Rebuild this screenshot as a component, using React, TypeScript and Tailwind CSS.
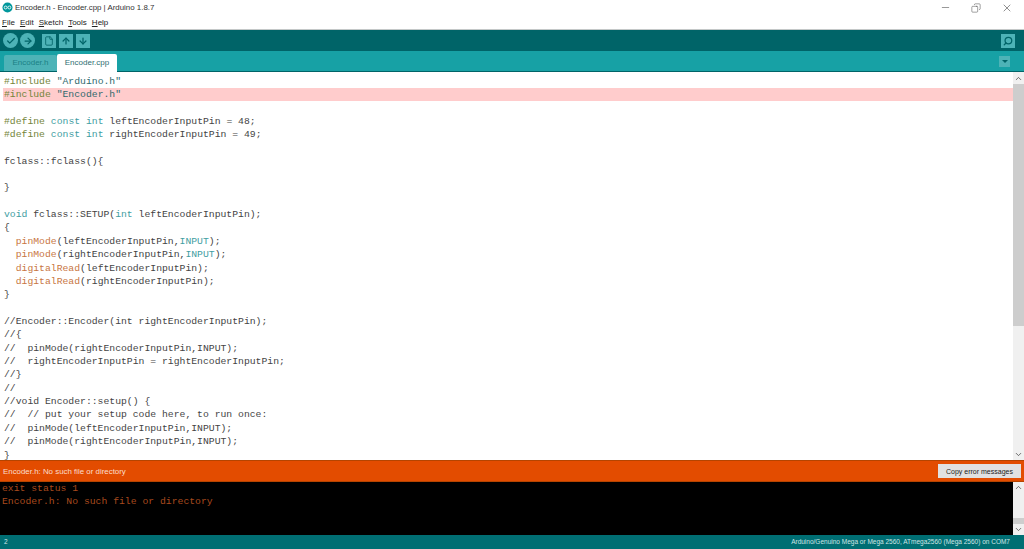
import { ArrowDown, ArrowRight, ArrowUp, Check, ChevronDown, ChevronUp, Copy, File, Minus, Search, X } from 'lucide-react'

const KW = 'text-[#3f9ea2]'
const FN = 'text-[#c8763f]'
const DEF = 'text-[#74853a]'
const STR = 'text-[#2f6a6d]'

type Seg = [string, string?]

const lines: Seg[][] = [
  [['#include', DEF], [' '], ['"Arduino.h"', STR]],
  [['#include', DEF], [' '], ['"Encoder.h"', STR]],
  [],
  [['#define', DEF], [' '], ['const', KW], [' '], ['int', KW], [' leftEncoderInputPin = 48;']],
  [['#define', DEF], [' '], ['const', KW], [' '], ['int', KW], [' rightEncoderInputPin = 49;']],
  [],
  [['fclass::fclass(){']],
  [],
  [['}']],
  [],
  [['void', KW], [' fclass::SETUP('], ['int', KW], [' leftEncoderInputPin);']],
  [['{']],
  [['  '], ['pinMode', FN], ['(leftEncoderInputPin,'], ['INPUT', KW], [');']],
  [['  '], ['pinMode', FN], ['(rightEncoderInputPin,'], ['INPUT', KW], [');']],
  [['  '], ['digitalRead', FN], ['(leftEncoderInputPin);']],
  [['  '], ['digitalRead', FN], ['(rightEncoderInputPin);']],
  [['}']],
  [],
  [['//Encoder::Encoder(int rightEncoderInputPin);']],
  [['//{']],
  [['//  pinMode(rightEncoderInputPin,INPUT);']],
  [['//  rightEncoderInputPin = rightEncoderInputPin;']],
  [['//}']],
  [['//']],
  [['//void Encoder::setup() {']],
  [['//  // put your setup code here, to run once:']],
  [['//  pinMode(leftEncoderInputPin,INPUT);']],
  [['//  pinMode(rightEncoderInputPin,INPUT);']],
  [['}']],
]

function ToolButton({ children }: { children: React.ReactNode }) {
  return (
    <div className="flex h-[14px] w-[14px] items-center justify-center bg-[#4db3b7] text-[#006468]">
      {children}
    </div>
  )
}

export default function App() {
  return (
    <div className="flex h-[549px] w-[1024px] flex-col overflow-hidden bg-white font-['Liberation_Sans',sans-serif] text-[#222]">
      {/* title bar */}
      <div className="flex h-[15px] shrink-0 items-center bg-white pl-[2px]">
        <svg width="11" height="11" viewBox="0 0 12 12" className="mr-[2px]">
          <circle cx="6" cy="6" r="5.5" fill="#00979c" />
          <circle cx="4" cy="6" r="1.6" fill="none" stroke="#fff" strokeWidth="0.9" />
          <circle cx="8" cy="6" r="1.6" fill="none" stroke="#fff" strokeWidth="0.9" />
        </svg>
        <span className="text-[7.9px] leading-none text-[#333]">Encoder.h - Encoder.cpp | Arduino 1.8.7</span>
        <div className="ml-auto flex items-center gap-[20px] pr-[11px] text-[#444]">
          <Minus size={11} strokeWidth={1.2} />
          <Copy size={10} strokeWidth={1.2} className="-scale-x-100" />
          <X size={12} strokeWidth={1.2} />
        </div>
      </div>

      {/* menu */}
      <div className="flex h-[14px] shrink-0 items-center gap-[5px] pl-[2px] pt-[1px] text-[8px] leading-none text-[#222]">
        <span><span className="underline">F</span>ile</span>
        <span><span className="underline">E</span>dit</span>
        <span><span className="underline">S</span>ketch</span>
        <span><span className="underline">T</span>ools</span>
        <span><span className="underline">H</span>elp</span>
      </div>

      {/* toolbar */}
      <div className="flex h-[22px] shrink-0 items-center border-t border-[#c4c8c8] bg-[#006468] pl-[3px] pr-[9px]">
        <div className="flex gap-[2px]">
          <div className="flex h-[15px] w-[15px] items-center justify-center rounded-full bg-[#4db3b7] text-[#006468]"><Check size={10} strokeWidth={3} /></div>
          <div className="flex h-[15px] w-[15px] items-center justify-center rounded-full bg-[#4db3b7] text-[#006468]"><ArrowRight size={10} strokeWidth={3} /></div>
        </div>
        <div className="ml-[7px] flex gap-[3px]">
          <ToolButton><File size={10} strokeWidth={2} /></ToolButton>
          <ToolButton><ArrowUp size={10} strokeWidth={3} /></ToolButton>
          <ToolButton><ArrowDown size={10} strokeWidth={3} /></ToolButton>
        </div>
        <div className="ml-auto">
          <ToolButton><Search size={10} strokeWidth={3} className="-scale-x-100" /></ToolButton>
        </div>
      </div>

      {/* tabs */}
      <div className="flex h-[21px] shrink-0 items-end border-b border-[#006468] bg-[#17a1a5] pl-[4px] pr-[14px]">
        <div className="flex h-[16px] w-[53px] items-center justify-center rounded-t-[2px] bg-[#4db3b7] text-[8px] leading-none text-[#1b8186]">Encoder.h</div>
        <div className="-mb-px flex h-[18px] w-[60px] items-center justify-center rounded-t-[2px] bg-white text-[8px] leading-none text-[#2f6f72]">Encoder.cpp</div>
        <div className="mb-[4px] ml-auto flex h-[11px] w-[11px] items-center justify-center bg-[#4db3b7]">
          <div className="h-0 w-0 border-x-[3px] border-t-[3px] border-x-transparent border-t-[#006468]" />
        </div>
      </div>

      {/* editor */}
      <div className="flex min-h-0 flex-1 bg-white">
        <div className="min-w-0 flex-1 overflow-hidden pt-[2.5px] font-['Liberation_Mono',monospace] text-[9.75px] leading-[13.37px] text-[#444]">
          {lines.map((line, i) => (
            <div key={i} className={`h-[13.37px] whitespace-pre pl-[4px] ${i === 1 ? 'bg-[linear-gradient(to_right,white_3px,#ffcccc_3px)]' : ''}`}>
              {line.map((seg, j) => (
                <span key={j} className={seg[1]}>{seg[0]}</span>
              ))}
            </div>
          ))}
        </div>
        <div className="flex w-[11px] shrink-0 flex-col bg-[#f0f0f0] text-[#444]">
          <div className="flex h-[12px] shrink-0 items-center justify-center"><ChevronUp size={9} strokeWidth={2} /></div>
          <div className="h-[242px] shrink-0 bg-[#cdcdcd]" />
          <div className="flex-1" />
          <div className="flex h-[11px] shrink-0 items-center justify-center"><ChevronDown size={9} strokeWidth={2} /></div>
        </div>
      </div>

      {/* error bar */}
      <div className="flex h-[22px] shrink-0 items-center justify-between border-y border-[#b54400] bg-[#e34c00] pl-[3px] pr-[3px]">
        <span className="pt-[2px] text-[7.9px] leading-none text-[#fbdccb]">Encoder.h: No such file or directory</span>
        <div className="flex h-[14px] w-[83px] items-center justify-center bg-[#e1e1e1] text-[7px] leading-none text-[#222]">Copy error messages</div>
      </div>

      {/* console */}
      <div className="flex h-[53px] shrink-0 bg-black">
        <div className="min-w-0 flex-1 whitespace-pre pl-[2px] font-['Liberation_Mono',monospace] text-[9.75px] leading-[13.37px] text-[#a84a1e]">
          <div>exit status 1</div>
          <div>Encoder.h: No such file or directory</div>
        </div>
        <div className="flex w-[11px] shrink-0 flex-col bg-[#f0f0f0] text-[#444]">
          <div className="flex h-[11px] items-center justify-center"><ChevronUp size={9} strokeWidth={2} /></div>
          <div className="flex-1" />
          <div className="h-[6px] bg-[#cdcdcd]" />
          <div className="flex h-[11px] items-center justify-center"><ChevronDown size={9} strokeWidth={2} /></div>
        </div>
      </div>

      {/* status */}
      <div className="flex h-[14px] shrink-0 items-center justify-between bg-[#006e73] pl-[4px] pr-[14px] text-[6.5px] leading-none text-[#cfe6e6]">
        <span>2</span>
        <span>Arduino/Genuino Mega or Mega 2560, ATmega2560 (Mega 2560) on COM7</span>
      </div>
    </div>
  )
}
